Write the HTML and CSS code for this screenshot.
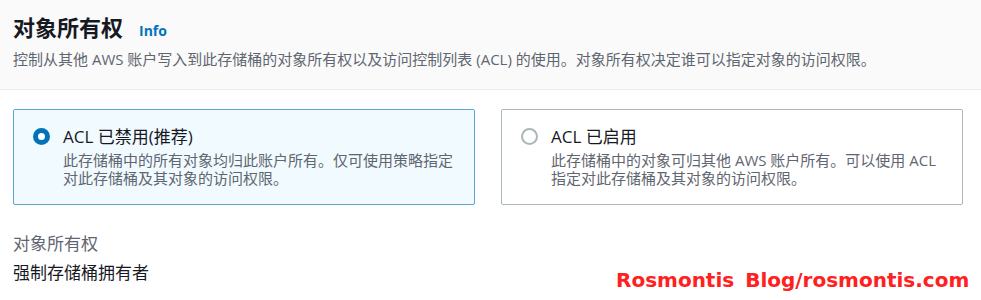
FILE: index.html
```html
<!DOCTYPE html>
<html lang="zh-CN">
<head>
<meta charset="utf-8">
<title>对象所有权</title>
<link rel="stylesheet" href="styles.css">
</head>
<body>
<div class="page">
  <header class="header">
    <h2 class="title">对象所有权<a class="info" href="#">Info</a></h2>
    <p class="desc">控制从其他 AWS 账户写入到此存储桶的对象所有权以及访问控制列表 (ACL) 的使用。对象所有权决定谁可以指定对象的访问权限。</p>
  </header>
  <section class="tiles">
    <label class="tile tile-selected">
      <span class="radio radio-checked"></span>
      <span class="tile-body">
        <span class="tile-label">ACL 已禁用(推荐)</span>
        <span class="tile-desc">此存储桶中的所有对象均归此账户所有。仅可使用策略指定对此存储桶及其对象的访问权限。</span>
      </span>
    </label>
    <label class="tile">
      <span class="radio"></span>
      <span class="tile-body">
        <span class="tile-label">ACL 已启用</span>
        <span class="tile-desc">此存储桶中的对象可归其他 AWS 账户所有。可以使用 ACL 指定对此存储桶及其对象的访问权限。</span>
      </span>
    </label>
  </section>
  <section class="field">
    <div class="field-label">对象所有权</div>
    <div class="field-value">强制存储桶拥有者</div>
  </section>
  <div class="watermark">Rosmontis Blog/rosmontis.com</div>
</div>
</body>
</html>
```
FILE: styles.css
```css
* { box-sizing: border-box; }
html, body {
  margin: 0;
  padding: 0;
  background: #ffffff;
}
body {
  font-family: "Open Sans", "Noto Sans CJK SC", sans-serif;
  color: #16191f;
}
.page {
  position: relative;
  width: 981px;
  height: 300px;
  overflow: hidden;
}
.header {
  background: #fafafa;
  border-bottom: 1px solid #eaeded;
  height: 90px;
  padding: 13px 13px 0;
}
.title {
  margin: 0;
  font-size: 22px;
  line-height: 28px;
  font-weight: 700;
  color: #16191f;
  display: flex;
  align-items: baseline;
}
.info {
  margin-left: 16px;
  font-size: 14px;
  font-weight: 700;
  color: #0073bb;
  text-decoration: none;
}
.desc {
  margin: 4px 0 0;
  font-size: 15px;
  line-height: 20px;
  color: #5f6670;
}
.tiles {
  display: grid;
  grid-template-columns: 462px 462px;
  column-gap: 26px;
  padding: 19px 0 0 13px;
}
.tile {
  display: flex;
  align-items: flex-start;
  gap: 13px;
  height: 96px;
  padding: 16px 19px 0;
  border: 1px solid #aab7b8;
  border-radius: 2px;
  background: #ffffff;
}
.tile-selected {
  border-color: #5aa6d8;
  background: #f1faff;
}
.radio {
  flex: none;
  width: 17px;
  height: 17px;
  margin-top: 2px;
  border-radius: 50%;
  border: 2px solid #aab7b8;
  background: #ffffff;
}
.radio-checked {
  border: 5px solid #0073bb;
  background: #ffffff;
}
.tile-body {
  display: flex;
  flex-direction: column;
}
.tile-label {
  font-size: 17px;
  line-height: 22px;
  color: #16191f;
}
.tile-desc {
  margin-top: 3px;
  font-size: 15px;
  line-height: 18px;
  color: #5f6670;
  width: 395px;
}
.field {
  padding: 26px 13px 0;
}
.field-label {
  font-size: 17px;
  line-height: 26px;
  color: #5f6670;
}
.field-value {
  margin-top: 3px;
  font-size: 17px;
  line-height: 26px;
  color: #16191f;
}
.watermark {
  position: absolute;
  left: 616px;
  top: 267px;
  font-family: "DejaVu Sans", sans-serif;
  font-weight: 700;
  font-size: 20px;
  line-height: 26px;
  word-spacing: 4px;
  color: #ff2020;
  white-space: nowrap;
}
```
